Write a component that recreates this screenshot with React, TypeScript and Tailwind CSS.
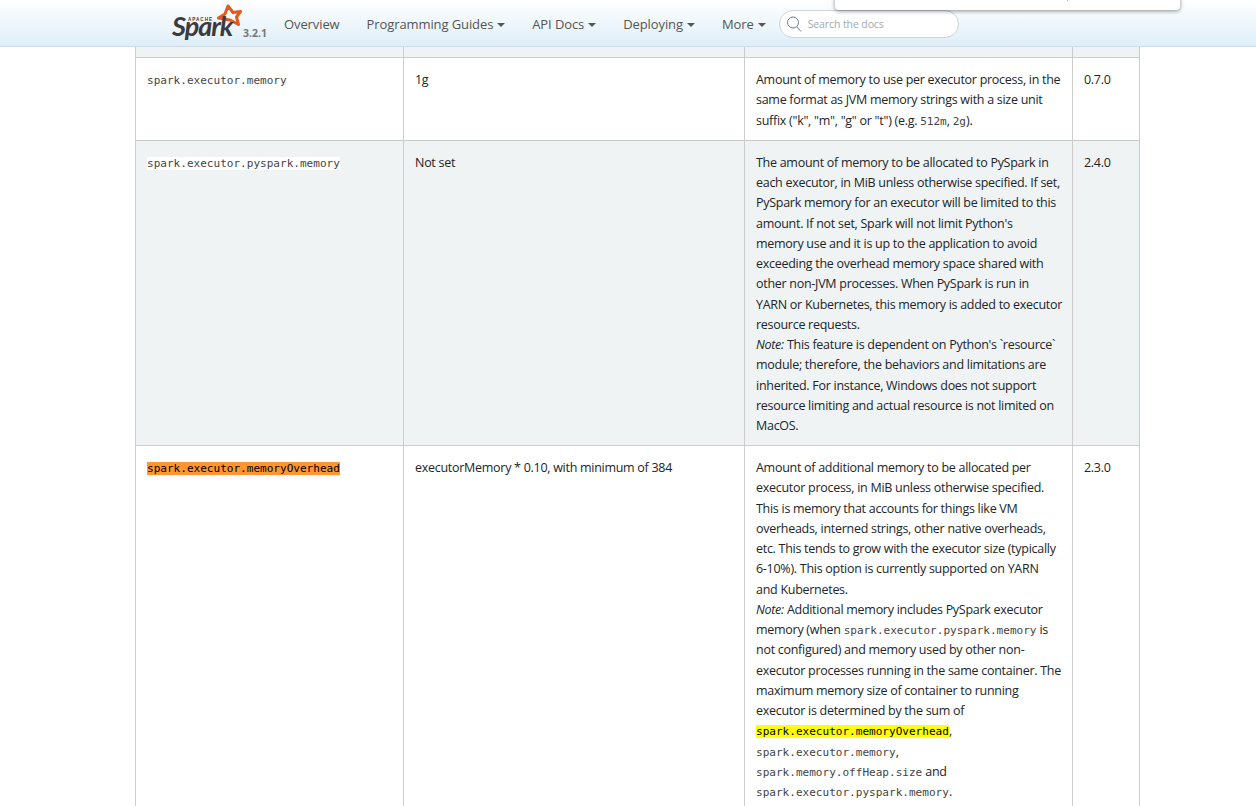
const Caret = () => (
  <span className="ml-[4px] inline-block align-[2px] border-x-[4px] border-t-[4.5px] border-x-transparent border-t-[#555]" />
);

const Code = ({ children }: { children: React.ReactNode }) => (
  <code className="bg-white tracking-normal leading-none text-[#444] font-['DejaVu_Sans_Mono',monospace] text-[11.05px]">{children}</code>
);

const Mark = ({ color, children }: { color: string; children: React.ReactNode }) => (
  <code className={`${color} tracking-normal leading-none text-black font-['DejaVu_Sans_Mono',monospace] text-[11.05px]`}>{children}</code>
);

const Logo = () => (
  <svg width="72" height="42" viewBox="0 0 72 42" className="shrink-0">
    <path
      d="M58 4 L63 10.5 L70.5 9.5 L66.5 15 L68.5 22.5 L60 18 L48.5 16 L55 12 Z"
      fill="none"
      stroke="#e25a1c"
      strokeWidth="3"
      strokeLinejoin="round"
    />
    <text x="18" y="18.5" fontSize="4.6" fontWeight="700" letterSpacing="1" fill="#3c3a3e" fontFamily="Liberation Sans, sans-serif">
      APACHE
    </text>
    <text x="2" y="34" fontSize="27" fontWeight="700" fontStyle="italic" letterSpacing="-1" fill="#3c3a3e" fontFamily="Lato, sans-serif">
      Spark
    </text>
  </svg>
);

const Search = () => (
  <div className="ml-[13px] flex h-[28px] w-[180px] items-center rounded-full border border-[#ced4da] bg-white pl-[6px]">
    <svg width="16" height="18" viewBox="0 0 16 18" fill="none" stroke="#6b7a8c" strokeWidth="1">
      <circle cx="7" cy="7.5" r="5.5" />
      <path d="M11 12l4 4.5" />
    </svg>
    <span className="ml-[6px] mt-[1px] text-[10.5px] tracking-[-0.1px] text-[#a3a8ad]">Search the docs</span>
  </div>
);

const cell = "border border-[#cccccc] px-[11px] pt-[11.8px] pb-[9px] align-top";
// first row sits a pixel lower than the padding alone gives
const firstCell = "border border-[#cccccc] px-[11px] pt-[12.6px] pb-[9.2px] align-top";

export default function App() {
  return (
    <div className="relative h-[806px] overflow-hidden bg-white font-['Open_Sans',sans-serif] text-[12.5px] leading-[20.25px] tracking-[-0.28px] text-[#212529]">
      <nav className="flex h-[47px] items-center border-b border-[#d0dde5] bg-gradient-to-b from-[#ffffff] to-[#deeef8] pl-[170px] text-[13px] tracking-[-0.1px] text-[#555]">
        <Logo />
        <span className="ml-[1px] mt-[20px] w-[41px] text-[10.5px] font-bold tracking-normal text-[#777]">3.2.1</span>
        <div className="mt-[3px] flex items-center gap-[27px]">
          <span>Overview</span>
          <span>Programming Guides<Caret /></span>
          <span>API Docs<Caret /></span>
          <span>Deploying<Caret /></span>
          <span>More<Caret /></span>
        </div>
        <div className="mt-[1px]">
          <Search />
        </div>
      </nav>
      <div className="absolute left-[835px] top-[-4px] h-[14px] w-[345px] rounded-b-[4px] bg-white shadow-[0_1px_4px_rgba(0,0,0,0.45)]">
        <div className="absolute left-[232px] top-[4px] h-[1px] w-[1px] bg-[#bbb]" />
      </div>
      <div className="pl-[135px]">
        <table className="w-[1004px] table-fixed border-collapse">
          <colgroup>
            <col className="w-[268px]" />
            <col className="w-[341px]" />
            <col className="w-[328px]" />
            <col className="w-[67px]" />
          </colgroup>
          <tbody>
            <tr className="h-[10px] bg-[#eff3f4]">
              <td className="border border-t-0 border-[#cccccc]" />
              <td className="border border-t-0 border-[#cccccc]" />
              <td className="border border-t-0 border-[#cccccc]" />
              <td className="border border-t-0 border-[#cccccc]" />
            </tr>
            <tr>
              <td className={firstCell}><Code>spark.executor.memory</Code></td>
              <td className={firstCell}>1g</td>
              <td className={`${firstCell} whitespace-nowrap`}>
                Amount of memory to use per executor process, in the<br />
                same format as JVM memory strings with a size unit<br />
                suffix ("k", "m", "g" or "t") (e.g. <Code>512m</Code>, <Code>2g</Code>).
              </td>
              <td className={firstCell}>0.7.0</td>
            </tr>
            <tr className="bg-[#eff3f4]">
              <td className={cell}><Code>spark.executor.pyspark.memory</Code></td>
              <td className={cell}>Not set</td>
              <td className={`${cell} whitespace-nowrap`}>
                The amount of memory to be allocated to PySpark in<br />
                each executor, in MiB unless otherwise specified. If set,<br />
                PySpark memory for an executor will be limited to this<br />
                amount. If not set, Spark will not limit Python's<br />
                memory use and it is up to the application to avoid<br />
                exceeding the overhead memory space shared with<br />
                other non-JVM processes. When PySpark is run in<br />
                YARN or Kubernetes, this memory is added to executor<br />
                resource requests.<br />
                <em>Note:</em> This feature is dependent on Python's `resource`<br />
                module; therefore, the behaviors and limitations are<br />
                inherited. For instance, Windows does not support<br />
                resource limiting and actual resource is not limited on<br />
                MacOS.
              </td>
              <td className={cell}>2.4.0</td>
            </tr>
            <tr>
              <td className={cell}><Mark color="bg-[#ff9632]">spark.executor.memoryOverhead</Mark></td>
              <td className={cell}>executorMemory * 0.10, with minimum of 384</td>
              <td className={`${cell} whitespace-nowrap`}>
                Amount of additional memory to be allocated per<br />
                executor process, in MiB unless otherwise specified.<br />
                This is memory that accounts for things like VM<br />
                overheads, interned strings, other native overheads,<br />
                etc. This tends to grow with the executor size (typically<br />
                6-10%). This option is currently supported on YARN<br />
                and Kubernetes.<br />
                <em>Note:</em> Additional memory includes PySpark executor<br />
                memory (when <Code>spark.executor.pyspark.memory</Code> is<br />
                not configured) and memory used by other non-<br />
                executor processes running in the same container. The<br />
                maximum memory size of container to running<br />
                executor is determined by the sum of<br />
                <Mark color="bg-[#ffff00]">spark.executor.memoryOverhead</Mark>,<br />
                <Code>spark.executor.memory</Code>,<br />
                <Code>spark.memory.offHeap.size</Code> and<br />
                <Code>spark.executor.pyspark.memory</Code>.
              </td>
              <td className={cell}>2.3.0</td>
            </tr>
          </tbody>
        </table>
      </div>
    </div>
  );
}
